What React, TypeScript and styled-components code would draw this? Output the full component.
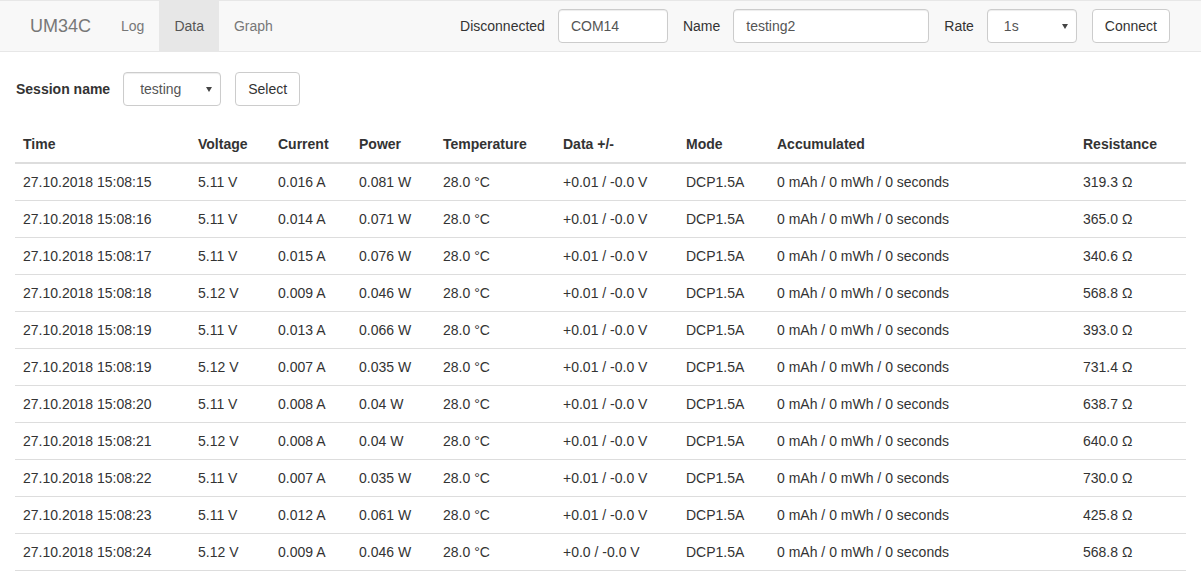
import React from "react";
import styled, { createGlobalStyle } from "styled-components";

const GlobalStyle = createGlobalStyle`
  * { box-sizing: border-box; }
  html, body { margin: 0; padding: 0; background: #fff; }
  body {
    font-family: "Liberation Sans", Arial, sans-serif;
    font-size: 14px;
    line-height: 20px;
    color: #333;
  }
`;

const Navbar = styled.nav`
  display: flex;
  align-items: stretch;
  height: 52px;
  padding: 0 15px;
  background: #f8f8f8;
  border-top: 1px solid #e7e7e7;
  border-bottom: 1px solid #e7e7e7;
`;

const Brand = styled.span`
  display: flex;
  align-items: center;
  padding: 0 15px;
  font-size: 18px;
  color: #777;
`;

const NavList = styled.ul`
  display: flex;
  margin: 0;
  padding: 0;
  list-style: none;
`;

const NavLink = styled.li<{ $active?: boolean }>`
  display: flex;
  align-items: center;
  padding: 0 15px;
  color: ${(p) => (p.$active ? "#555" : "#777")};
  background: ${(p) => (p.$active ? "#e7e7e7" : "transparent")};
  cursor: pointer;
`;

const NavForm = styled.form`
  display: flex;
  align-items: center;
  margin-left: auto;
  padding-right: 16px;
  gap: 15px;
`;

const Group = styled.div`
  display: flex;
  align-items: center;
  gap: 13px;
`;

const Label = styled.label<{ $bold?: boolean }>`
  font-weight: ${(p) => (p.$bold ? 700 : 400)};
  color: #333;
`;

const Input = styled.input<{ $w: number }>`
  width: ${(p) => p.$w}px;
  height: 34px;
  padding: 6px 12px;
  font: inherit;
  color: #555;
  background: #fff;
  border: 1px solid #ccc;
  border-radius: 4px;
  box-shadow: inset 0 1px 1px rgba(0, 0, 0, 0.075);
  outline: none;
`;

const SelectWrap = styled.div`
  position: relative;
  display: inline-block;
  &::after {
    content: "";
    position: absolute;
    right: 9px;
    top: 15px;
    border-left: 3.5px solid transparent;
    border-right: 3.5px solid transparent;
    border-top: 5px solid #444;
    pointer-events: none;
  }
`;

const Select = styled.select<{ $w: number }>`
  appearance: none;
  width: ${(p) => p.$w}px;
  height: 34px;
  padding: 6px 20px 6px 16px;
  font: inherit;
  color: #555;
  background: #fff;
  border: 1px solid #ccc;
  border-radius: 4px;
  box-shadow: inset 0 1px 1px rgba(0, 0, 0, 0.075);
  outline: none;
`;

const Button = styled.button`
  height: 34px;
  padding: 6px 12px;
  font: inherit;
  color: #333;
  background: #fff;
  border: 1px solid #ccc;
  border-radius: 4px;
  cursor: pointer;
`;

const Content = styled.main`
  padding: 20px 15px 0;
`;

const SessionForm = styled.div`
  display: flex;
  align-items: center;
  gap: 14px;
  margin-bottom: 20px;
  padding-left: 1px;
`;

const Table = styled.table`
  width: 100%;
  border-collapse: collapse;
  table-layout: fixed;
  border-bottom: 1px solid #ddd;
`;

const Th = styled.th`
  padding: 8px;
  text-align: left;
  font-weight: 700;
  border-bottom: 2px solid #ddd;
  line-height: 20px;
`;

const Td = styled.td`
  padding: 8px;
  border-top: 1px solid #ddd;
  line-height: 20px;
  white-space: nowrap;
`;

const columns: [string, number][] = [
  ["Time", 175],
  ["Voltage", 80],
  ["Current", 81],
  ["Power", 84],
  ["Temperature", 120],
  ["Data +/-", 123],
  ["Mode", 91],
  ["Accumulated", 306],
  ["Resistance", 111],
];

const rows: [string, string, string, string, string, string][] = [
  ["15:08:15", "5.11", "0.016", "0.081", "+0.01", "319.3"],
  ["15:08:16", "5.11", "0.014", "0.071", "+0.01", "365.0"],
  ["15:08:17", "5.11", "0.015", "0.076", "+0.01", "340.6"],
  ["15:08:18", "5.12", "0.009", "0.046", "+0.01", "568.8"],
  ["15:08:19", "5.11", "0.013", "0.066", "+0.01", "393.0"],
  ["15:08:19", "5.12", "0.007", "0.035", "+0.01", "731.4"],
  ["15:08:20", "5.11", "0.008", "0.04", "+0.01", "638.7"],
  ["15:08:21", "5.12", "0.008", "0.04", "+0.01", "640.0"],
  ["15:08:22", "5.11", "0.007", "0.035", "+0.01", "730.0"],
  ["15:08:23", "5.11", "0.012", "0.061", "+0.01", "425.8"],
  ["15:08:24", "5.12", "0.009", "0.046", "+0.0", "568.8"],
];

export default function App() {
  return (
    <>
      <GlobalStyle />
      <Navbar>
        <Brand>UM34C</Brand>
        <NavList>
          <NavLink>Log</NavLink>
          <NavLink $active>Data</NavLink>
          <NavLink>Graph</NavLink>
        </NavList>
        <NavForm onSubmit={(e) => e.preventDefault()}>
          <Group>
            <Label>Disconnected</Label>
            <Input $w={110} defaultValue="COM14" />
          </Group>
          <Group>
            <Label>Name</Label>
            <Input $w={196} defaultValue="testing2" />
          </Group>
          <Group>
            <Label>Rate</Label>
            <SelectWrap>
              <Select $w={90} defaultValue="1s">
                <option>1s</option>
                <option>2s</option>
                <option>5s</option>
              </Select>
            </SelectWrap>
          </Group>
          <Button type="button">Connect</Button>
        </NavForm>
      </Navbar>
      <Content>
        <SessionForm>
          <Group>
            <Label $bold>Session name</Label>
            <SelectWrap>
              <Select $w={98} defaultValue="testing">
                <option>testing</option>
                <option>testing2</option>
              </Select>
            </SelectWrap>
          </Group>
          <Button type="button">Select</Button>
        </SessionForm>
        <Table>
          <colgroup>
            {columns.map(([n, w]) => (
              <col key={n} style={{ width: w }} />
            ))}
          </colgroup>
          <thead>
            <tr>
              {columns.map(([n]) => (
                <Th key={n}>{n}</Th>
              ))}
            </tr>
          </thead>
          <tbody>
            {rows.map(([t, v, a, w, d, r], i) => (
              <tr key={i}>
                <Td>27.10.2018 {t}</Td>
                <Td>{v} V</Td>
                <Td>{a} A</Td>
                <Td>{w} W</Td>
                <Td>28.0 °C</Td>
                <Td>{d} / -0.0 V</Td>
                <Td>DCP1.5A</Td>
                <Td>0 mAh / 0 mWh / 0 seconds</Td>
                <Td>{r} Ω</Td>
              </tr>
            ))}
          </tbody>
        </Table>
      </Content>
    </>
  );
}
